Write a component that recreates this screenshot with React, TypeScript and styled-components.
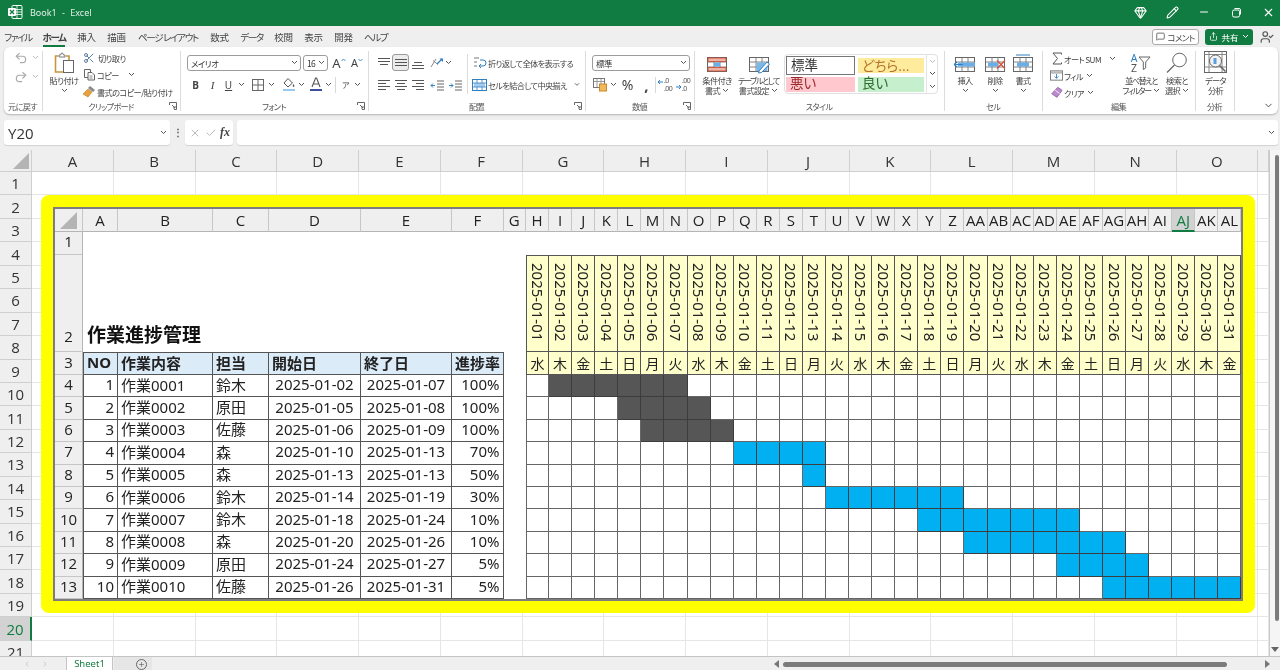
import React from "react";
import styled, { createGlobalStyle } from "styled-components";
import { Undo2, Redo2, Scissors, Gem, Pencil, Minus, X, Check, Plus, MessageSquare, Share, UserCheck, ChevronDown, ChevronLeft, ChevronRight } from "lucide-react";

const UI = `"Noto Sans", "Noto Sans CJK JP", sans-serif`;
const JP = `"Noto Sans CJK JP", sans-serif`;
const GREEN = "#107c41";

const Global = createGlobalStyle`
  html, body { margin: 0; padding: 0; height: 100%; background: #f0f0f0; overflow: hidden; }
  * { box-sizing: border-box; }
`;

const Page = styled.div`
  width: 1280px; height: 670px; display: flex; flex-direction: column; overflow: hidden;
  background: #efefef; font-family: ${JP}; font-feature-settings: "palt"; color: #444; filter: blur(0.3px);
`;
const TitleBar = styled.div`
  height: 26px; flex: none; background: ${GREEN}; display: flex; align-items: center; padding: 0 0 2px 7px; color: #e4efe8;
`;
const TitleText = styled.div`
  font: 9px "Noto Sans", sans-serif; margin-left: 7px; word-spacing: 3px; flex: 1;
`;
const WinBtn = styled.div<{ $w: number }>`
  width: ${(p) => p.$w}px; display: flex; justify-content: center; align-items: center;
`;
const MenuRow = styled.div`
  height: 21px; flex: none; display: flex; align-items: center; padding: 2px 0 0 6px; gap: 13px; font-size: 9.5px;
`;
const MenuItem = styled.div<{ $active?: boolean; $w: number; $kana?: boolean }>`
  width: ${(p) => p.$w}px; height: 18px; line-height: 16px; white-space: nowrap; display: flex; justify-content: center; color: #444;
  letter-spacing: ${(p) => (p.$kana ? "-1.3px" : "-.3px")};
  font-weight: ${(p) => (p.$active ? 700 : 400)};
  border-bottom: 2px solid ${(p) => (p.$active ? GREEN : "transparent")};
`;
const MenuRight = styled.div`
  margin-left: auto; display: flex; align-items: center; padding: 0 6px 2px 0;
`;
const CommentBtn = styled.div`
  width: 47px; height: 16px; background: #fff; border: 1px solid #aaa; border-radius: 3px; font-size: 8.5px; letter-spacing: -.6px;
  display: flex; align-items: center; justify-content: center; gap: 2px; margin-right: 6px;
`;
const ShareBtn = styled.div`
  width: 48px; height: 16px; background: ${GREEN}; border-radius: 3px; color: #fff; font-size: 8.5px;
  display: flex; align-items: center; justify-content: center; gap: 3px; margin-right: 7px;
`;
const Ribbon = styled.div`
  height: 67px; flex: none; margin: 0 2px 0 4px; background: #fff; border-radius: 6px; display: flex;
  box-shadow: 0 1px 2px rgba(0,0,0,.25);
`;
const Group = styled.div<{ $w: number }>`
  width: ${(p) => p.$w}px; display: flex; flex-direction: column; position: relative;
  &::after { content: ""; position: absolute; right: 0; top: 4px; bottom: 3px; width: 1px; background: #dcdcdc; }
`;
const GroupBody = styled.div<{ $pl?: number; $pt?: number; $col?: boolean }>`
  flex: 1; display: flex; flex-direction: ${(p) => (p.$col ? "column" : "row")};
  padding: ${(p) => p.$pt ?? 7}px 0 0 ${(p) => p.$pl ?? 6}px; min-height: 0;
`;
const GroupFoot = styled.div`
  height: 14px; display: grid; grid-template-columns: 1fr auto 1fr; align-items: center; font-size: 8.2px; letter-spacing: -.7px; color: #555;
  padding: 0 2px 2px 0; line-height: 12px;
`;
const FootLabel = styled.span`grid-column: 2; white-space: nowrap;`;
const Launcher = styled.span`grid-column: 3; justify-self: end; display: flex; margin-right: 2px;`;
const SmallRow = styled.div<{ $mt?: number }>`
  display: flex; align-items: center; height: 17px; font-size: 8.2px; letter-spacing: -.6px; white-space: nowrap;
  margin-top: ${(p) => p.$mt ?? 0}px;
`;
const IconCell = styled.div<{ $w: number; $sel?: boolean }>`
  width: ${(p) => p.$w}px; height: 17px; flex: none; display: flex; align-items: center; justify-content: center;
  ${(p) => p.$sel && "border: 1px solid #9a9a9a; border-radius: 3px; background: #ececec;"}
`;
const Gap = styled.div<{ $w: number }>`width: ${(p) => p.$w}px; flex: none;`;
const VLine = styled.div`width: 1px; height: 16px; background: #d8d8d8; flex: none;`;
const Stack = styled.div<{ $w: number; $pt?: number; $pl?: number }>`
  width: ${(p) => p.$w}px; flex: none; display: flex; flex-direction: column;
  padding: ${(p) => p.$pt ?? 0}px 0 0 ${(p) => p.$pl ?? 0}px;
`;
const ColBar = styled.div`width: 1px; height: 40px; background: #dcdcdc; flex: none;`;
const Big = styled.div<{ $w: number; $pt?: number }>`
  width: ${(p) => p.$w}px; flex: none; display: flex; flex-direction: column; align-items: center;
  padding-top: ${(p) => p.$pt ?? 0}px;
  font-size: 8.2px; letter-spacing: -.6px; line-height: 10.5px; text-align: center; white-space: nowrap;
`;
const BigIcon = styled.div`height: 22px; display: flex; align-items: flex-end; justify-content: center; margin-bottom: 1px;`;
const BigLine = styled.div<{ $tight?: boolean }>`
  height: 10px; display: flex; align-items: center; gap: 2px; ${(p) => p.$tight && "letter-spacing: -1.5px;"}
`;
const Select = styled.div<{ $w: number }>`
  width: ${(p) => p.$w}px; height: 16px; flex: none; border: 1px solid #9c9c9c; border-radius: 3px; background: #fff;
  display: flex; align-items: center; justify-content: space-between; padding: 0 2px 0 3px; font-size: 8.5px; color: #333;
`;
const Glyph = styled.span<{ $size?: number; $weight?: number; $italic?: boolean; $under?: boolean; $serif?: boolean }>`
  font: ${(p) => (p.$italic ? "italic" : "normal")} ${(p) => p.$weight ?? 400} ${(p) => p.$size ?? 10}px ${(p) => (p.$serif ? `"Liberation Serif", serif` : `"Noto Sans", sans-serif`)};
  text-decoration: ${(p) => (p.$under ? "underline" : "none")}; color: #444; letter-spacing: 0;
`;
const Gallery = styled.div`
  width: 154px; height: 40px; margin: -1px 0 0 5px; flex: none; border: 1px solid #e0e0e0; border-radius: 4px; display: grid;
  grid-template-columns: 72px 69px 11px; grid-template-rows: 20px 18px; align-items: center;
`;
const StyleCell = styled.div<{ $bg: string; $fg: string; $norm?: boolean; $low?: boolean }>`
  height: ${(p) => (p.$norm ? 19 : 15)}px; background: ${(p) => p.$bg}; color: ${(p) => p.$fg};
  font-size: 13.5px; line-height: ${(p) => (p.$norm ? 15 : p.$low ? 11 : 14)}px; padding-left: 4px; margin: 0 2px 0 1px;
  white-space: nowrap; border: ${(p) => (p.$norm ? "1.5px solid #777" : "none")};
`;
const GalleryScroll = styled.div`
  grid-column: 3; grid-row: 1 / span 2; align-self: stretch; border-left: 1px solid #e4e4e4; display: flex; flex-direction: column;
  align-items: center; justify-content: space-around;
`;
const SortIcon = styled.div`height: 22px; display: flex; align-items: center; gap: 1px;`;
const SortLetters = styled.div`
  display: flex; flex-direction: column; font: 10.5px/10.5px "Noto Sans", sans-serif; color: #555; letter-spacing: 0;
`;
const SortA = styled.span`color: #2f7fc1;`;
const Collapse = styled.div`
  flex: 1; display: flex; justify-content: flex-end; align-items: flex-end; padding: 0 4px 3px 0;
`;
const FormulaBar = styled.div`
  height: 25px; margin: 6px 2px 5px 4px; display: flex; align-items: stretch; flex: none;
`;
const FBox = styled.div<{ $w?: number }>`
  ${(p) => (p.$w ? `width: ${p.$w}px; flex: none;` : "flex: 1;")} background: #fff; border-radius: 3px; display: flex;
  align-items: center; justify-content: space-between; padding: 0 3px 0 4px; box-shadow: 0 1px 1px rgba(0,0,0,.12);
`;
const NameText = styled.span`font: 15px "Open Sans", sans-serif; color: #333;`;
const Dots = styled.div`
  width: 15px; flex: none; text-align: center; font: 700 10px/24px "Noto Sans", sans-serif; color: #555;
`;
const SheetRow = styled.div`height: 506px; display: flex; flex: none; background: #fff;`;
const SheetArea = styled.div`
  width: 1270px; position: relative; overflow: hidden; border-right: 1px solid #c9c9c9;
`;
const OuterGrid = styled.div`
  display: grid; grid-template-columns: 32px repeat(15, 81.75px) 1fr; grid-template-rows: 22px repeat(21, 23.45px);
`;
const OuterHead = styled.div<{ $sel?: boolean }>`
  background: ${(p) => (p.$sel ? "#d2d2d2" : "#efefef")}; color: ${(p) => (p.$sel ? GREEN : "#333")};
  font: 15px "Open Sans", sans-serif; display: flex; align-items: center; justify-content: center;
  border-right: ${(p) => (p.$sel ? `2px solid ${GREEN}` : "1px solid #cfcfcf")}; border-bottom: 1px solid #cfcfcf;
`;
const Corner = styled.div<{ $pad: number }>`
  background: #efefef; display: flex; align-items: flex-end; justify-content: flex-end; padding: 0 ${(p) => p.$pad}px ${(p) => p.$pad}px 0;
  border-right: 1px solid #cfcfcf; border-bottom: 1px solid #cfcfcf;
`;
const OuterCell = styled.div`
  border-right: 1px solid #e6e6e6; border-bottom: 1px solid #e6e6e6; background: #fff;
`;
const Frame = styled.div`
  position: absolute; left: 41px; top: 45px; width: 1214px; height: 418px; background: #ffff00; border-radius: 8px; padding: 12px;
`;
const Inner = styled.div`
  width: 100%; height: 100%; border: 2px solid #7d7d7d; background: #fff; overflow: hidden; display: grid;
  grid-template-columns: 28px 35px 95px 56px 92px 91px 51.5px 22.5px repeat(31, 23.08px);
  grid-template-rows: 23px 22.5px 97.5px 23px repeat(10, 22.4px);
  font-family: "Noto Sans", "Noto Sans CJK JP", sans-serif; font-size: 15px; color: #222;
`;
const InnerHead = styled.div<{ $sel?: boolean }>`
  background: ${(p) => (p.$sel ? "#d2d2d2" : "#efefef")}; color: ${(p) => (p.$sel ? GREEN : "#222")};
  font: 15px "Open Sans", sans-serif; display: flex; align-items: center; justify-content: center; white-space: nowrap; overflow: hidden;
  border-right: 1px solid #c6c6c6; border-bottom: ${(p) => (p.$sel ? `2px solid ${GREEN}` : "1px solid #b5b5b5")};
`;
const InnerRowHead = styled.div<{ $end?: boolean }>`
  background: #efefef; color: #222; font: 15px "Open Sans", sans-serif; display: flex; justify-content: center;
  align-items: ${(p) => (p.$end ? "flex-end" : "center")}; padding-bottom: ${(p) => (p.$end ? 5 : 3)}px;
  border-right: 1px solid #b5b5b5; border-bottom: 1px solid #c6c6c6;
`;
const Blank = styled.div<{ $span?: number }>`
  grid-column: span ${(p) => p.$span ?? 1}; background: #fff;
`;
const Title = styled.div`
  grid-column: span 6; font: 700 19px ${UI}; display: flex; align-items: flex-end; padding: 0 0 4px 4px; background: #fff; color: #111;
`;
const Cell = styled.div<{ $bg?: string; $align?: string; $bold?: boolean; $top?: boolean; $left?: boolean; $line?: string }>`
  background: ${(p) => p.$bg ?? "#fff"}; display: flex; align-items: center; white-space: nowrap; overflow: hidden;
  justify-content: ${(p) => p.$align ?? "flex-start"}; font-weight: ${(p) => (p.$bold ? 700 : 400)};
  padding: 0 3px 3px 3px; color: #222;
  border-right: 1px solid ${(p) => p.$line ?? "#555"}; border-bottom: 1px solid ${(p) => p.$line ?? "#555"};
  ${(p) => p.$top && `border-top: 1px solid ${p.$line ?? "#555"};`}
  ${(p) => p.$left && `border-left: 1px solid ${p.$line ?? "#555"};`}
`;
const DateCell = styled(Cell)`
  writing-mode: vertical-rl; align-items: center; justify-content: flex-start; padding: 7px 0 0 0; font-size: 15px; line-height: 1;
`;
const DayCell = styled(Cell)`padding: 0 0 1px 0; font-size: 14px;`;
const GanttCell = styled(Cell)`padding: 0;`;
const VScroll = styled.div`
  flex: 1; background: #f5f5f5; display: flex; flex-direction: column; align-items: flex-end; padding: 5px 1px 0 0;
`;
const VThumb = styled.div`width: 4px; height: 466px; background: #7b7b7b; border-radius: 3px;`;
const VArrow = styled.div`
  margin: 26px 0 0 0; width: 8px; height: 0; border: 4px solid transparent; border-top: 5px solid #666; border-bottom: 0;
`;
const TabBar = styled.div`
  flex: 1; display: flex; align-items: stretch; background: #efefef; border-top: 1px solid #c4c4c4; font-size: 9.5px;
`;
const TabNav = styled.div`
  width: 66px; flex: none; display: flex; align-items: center; justify-content: center; gap: 10px; padding-left: 6px; color: #b5b5b5;
`;
const Tab = styled.div`
  width: 47px; flex: none; background: #fff; color: ${GREEN}; font: 9.5px "Noto Sans", sans-serif; text-align: center; line-height: 14px;
  border-left: 1px solid #c4c4c4; border-right: 1px solid #c4c4c4;
`;
const TabAdd = styled.div`
  width: 38px; flex: none; margin-left: 1px; padding-left: 16px; background: #e6e6e6; display: flex; align-items: center; justify-content: center;
`;
const AddRing = styled.div`
  width: 11px; height: 11px; border: 1px solid #666; border-radius: 50%; display: flex; align-items: center; justify-content: center;
`;
const HTrack = styled.div`
  flex: 1; display: flex; align-items: center; padding: 0 0 0 622px; gap: 4px;
`;
const HThumb = styled.div`width: 444px; height: 5px; background: #7b7b7b; border-radius: 3px; margin-right: 34px; flex: none;`;
const HArrow = styled.div<{ $left?: boolean }>`
  width: 0; height: 0; flex: none; border-top: 4px solid transparent; border-bottom: 4px solid transparent;
  ${(p) => (p.$left ? "border-right: 5px solid #777;" : "border-left: 5px solid #777;")}
`;

const Chev = ({ c = "#555" }: { c?: string }) => (
  <svg width="7" height="5" viewBox="0 0 7 5"><path d="M1 1l2.5 2.5L6 1" fill="none" stroke={c} strokeWidth="1" /></svg>
);
const Caret = ({ down }: { down?: boolean }) => (
  <svg width="5" height="10" viewBox="0 0 5 10"><path d={down ? "M.5 1L2.5 3 4.5 1" : "M.5 3L2.5 1 4.5 3"} fill="none" stroke="#4a90c8" strokeWidth="1" /></svg>
);
const Launch = () => (
  <svg width="8" height="8" viewBox="0 0 8 8" fill="none" stroke="#666"><path d="M.5 3V.5H7.5V7.5H5M3 3l3 3M6 4v2H4" /></svg>
);
const Lines = ({ l, c = "#555" }: { l: number[][]; c?: string }) => (
  <svg width="14" height="14" viewBox="0 0 14 14" stroke={c} strokeWidth="1">
    {l.map((a, i) => <line key={i} x1={a[0]} x2={a[1]} y1={a[2] + 0.5} y2={a[2] + 0.5} />)}
  </svg>
);
const Excel = () => (
  <svg width="16" height="16" viewBox="0 0 16 16">
    <rect x="5" y="1.5" width="10" height="13" rx="1" fill="none" stroke="#fff" />
    <path d="M10 2v12M5 5.5h10M5 8h10M5 10.5h10" stroke="#fff" strokeWidth=".8" />
    <rect x="1" y="4" width="8" height="8" rx="1" fill="#fff" />
    <path d="M3 6l4 4M7 6l-4 4" stroke={GREEN} strokeWidth="1.3" />
  </svg>
);
const Paste = () => (
  <svg width="21" height="22" viewBox="0 0 21 22">
    <path d="M4 4H1.5v16h8" fill="#fff" stroke="#c8963e" strokeWidth="1.6" />
    <path d="M12 4h3v4" fill="none" stroke="#c8963e" strokeWidth="1.6" />
    <path d="M5 5V3h1.5l1-2h1l1 2H11v2z" fill="#fff" stroke="#777" />
    <rect x="9.5" y="8.5" width="10" height="12" fill="#fff" stroke="#666" />
  </svg>
);
const CopyI = () => (
  <svg width="13" height="13" viewBox="0 0 13 13" fill="#fff" stroke="#666">
    <path d="M1.5 1.5h6v8h-6z" /><path d="M5 4.5h4l2.5 2.5v5H5z" /><path d="M6.5 8h3M6.5 10h3" stroke="#888" />
  </svg>
);
const Painter = () => (
  <svg width="14" height="14" viewBox="0 0 14 14">
    <path d="M8 1l5 4-2 2-5-4z" fill="#888" /><path d="M6 4l4 3-4 5-5-3z" fill="#e6a23c" stroke="#b9772a" strokeWidth=".6" />
  </svg>
);
const Borders = () => (
  <svg width="14" height="14" viewBox="0 0 14 14" fill="none" stroke="#666"><rect x="1.5" y="1.5" width="11" height="11" /><path d="M7 2v10M2 7h10" /></svg>
);
const Fill = () => (
  <svg width="14" height="15" viewBox="0 0 14 15"><path d="M6 1.5l4.5 4.5L6 10 2 6z" fill="#fff" stroke="#555" /><path d="M11.5 7c1 1.6 1.4 2.3 0 3-1.2-.7-1-1.4 0-3z" fill="#555" /><rect x="1" y="12" width="12" height="2" fill="#9dc8ee" /></svg>
);
const FontColor = () => (
  <svg width="14" height="15" viewBox="0 0 14 15"><path d="M3 10l3.6-9h1L11 10M4.5 7h5" fill="none" stroke="#555" strokeWidth="1.1" /><rect x="1" y="12" width="12" height="2" fill="#3c4e99" /></svg>
);
const Orient = () => (
  <svg width="15" height="14" viewBox="0 0 15 14"><path d="M2 11L7 3M4 4.5l5 4" stroke="#888" fill="none" /><path d="M8 8l5-5" stroke="#2f7fc1" strokeWidth="1.2" /><path d="M10.5 2.5H14V6z" fill="#2f7fc1" /></svg>
);
const Indent = ({ flip }: { flip?: boolean }) => (
  <svg width="14" height="14" viewBox="0 0 14 14"><path d="M7 3h7M7 6h7M7 9h7M7 12h7" stroke="#666" /><path d={flip ? "M1 7.5h4M3 5.5l2 2-2 2" : "M5 7.5H1M3 5.5l-2 2 2 2"} stroke="#2f7fc1" fill="none" /></svg>
);
const Wrap = () => (
  <svg width="15" height="15" viewBox="0 0 15 15" fill="none"><path d="M2 3h5M2 7h3M2 11h3" stroke="#777" /><path d="M8 5h3a2.5 2.5 0 0 1 0 6H7M9 9l-2 2 2 2" stroke="#2f7fc1" /></svg>
);
const Merge = () => (
  <svg width="15" height="14" viewBox="0 0 15 14"><rect x=".5" y="1.5" width="14" height="11" fill="#fff" stroke="#2f7fc1" /><rect x="2" y="5" width="11" height="4" fill="#a8cdee" /><path d="M.5 5h14M.5 9h14M5 2v3M10 2v3M5 9v3M10 9v3" stroke="#2f7fc1" strokeWidth=".8" /></svg>
);
const Account = () => (
  <svg width="15" height="15" viewBox="0 0 15 15"><rect x=".5" y="1.5" width="11" height="9" fill="#fff" stroke="#777" /><path d="M1 4.5h10M4 2v8M8 2v8" stroke="#999" /><rect x="6.5" y="7" width="7" height="7" fill="#f2b95c" stroke="#c88a2a" /></svg>
);
const Decimal = ({ dec }: { dec?: boolean }) => (
  <svg width="16" height="15" viewBox="0 0 16 15" fontFamily="Noto Sans, sans-serif" fontSize="7" fill="#555">
    <text x="7" y="6">{dec ? ".00" : ".0"}</text><text x="7" y="14">{dec ? ".0" : ".00"}</text>
    <path d={dec ? "M1 10h5M4 8l2 2-2 2" : "M6 5H1M3 3L1 5l2 2"} stroke="#2f7fc1" fill="none" />
  </svg>
);
const Table = ({ children }: { children?: React.ReactNode }) => (
  <svg width="22" height="20" viewBox="0 0 22 20" fill="none">
    <rect x="1.5" y="3.5" width="19" height="14" fill="#fff" stroke="#666" />
    <path d="M1.5 8h19M1.5 13h19M8 3.5v14M14 3.5v14" stroke="#777" strokeWidth=".9" />
    {children}
  </svg>
);
const Cond = () => (
  <Table>
    <rect x="2" y="4" width="18" height="3.5" fill="#f0b2a5" stroke="#c4492f" strokeWidth=".8" />
    <rect x="2" y="13.5" width="18" height="3.5" fill="#f0b2a5" stroke="#c4492f" strokeWidth=".8" />
    <rect x="8" y="8.5" width="6" height="4" fill="#6aaee6" />
  </Table>
);
const TableFmt = () => (
  <Table>
    <rect x="8.5" y="8.5" width="11" height="8.5" fill="#7bb8ea" />
    <path d="M11 17L19 8l2.5 2-8 8.5-3 .5z" fill="#fff" stroke="#2f7fc1" />
  </Table>
);
const Insert = () => (
  <Table>
    <rect x="4" y="8.5" width="17" height="4" fill="#69aee6" />
    <path d="M9 10.5H0M3 8l-3 2.5L3 13" stroke="#2f7fc1" strokeWidth="1.2" />
  </Table>
);
const Remove = () => (
  <Table>
    <rect x="4" y="8.5" width="10" height="4" fill="#69aee6" />
    <path d="M13 6.5l8 8M21 6.5l-8 8" stroke="#d9503c" strokeWidth="1.3" />
  </Table>
);
const Format = () => (
  <Table>
    <rect x="5" y="8.5" width="12" height="4" fill="#69aee6" />
    <path d="M4 1h14" stroke="#2f7fc1" />
  </Table>
);
const Sum = () => (
  <svg width="12" height="13" viewBox="0 0 12 13"><path d="M10.5 2.5V1H2l4.5 5.5L2 12h8.5v-1.5" fill="none" stroke="#555" /></svg>
);
const FillDown = () => (
  <svg width="14" height="13" viewBox="0 0 14 13"><rect x=".5" y="1.5" width="13" height="10" fill="#fff" stroke="#777" /><rect x="1" y="2" width="12" height="2.5" fill="#b9b9b9" /><path d="M7 5v4.5M5 7.5l2 2 2-2" stroke="#2f7fc1" fill="none" /></svg>
);
const Eraser = () => (
  <svg width="15" height="15" viewBox="0 0 15 15"><path d="M9 1.5l5 3.5-6 8-6-4z" fill="#b98ad0" stroke="#96609f" /><path d="M6 5l5 3.5" stroke="#fff" /></svg>
);
const Funnel = () => (
  <svg width="13" height="14" viewBox="0 0 13 14"><path d="M1 1h11L7.7 6v6l-2.4 1.5V6z" fill="#fff" stroke="#666" /></svg>
);
const Find = () => (
  <svg width="22" height="22" viewBox="0 0 22 22" fill="none" stroke="#666"><circle cx="13.5" cy="8" r="6.8" /><path d="M8.5 13L1 20.5" strokeWidth="1.2" /></svg>
);
const Analyze = () => (
  <svg width="23" height="23" viewBox="0 0 23 23" fill="none" stroke="#666">
    <rect x=".5" y=".5" width="22" height="21" fill="#fff" />
    <path d="M.5 3.5h22M.5 16h22M5 1v20M18 1v20" stroke="#888" />
    <circle cx="11.5" cy="10" r="6" fill="#f3f3f3" />
    <rect x="9.5" y="7" width="3" height="6" fill="#5a9fdc" stroke="none" />
    <path d="M15.5 14.5l6 6" strokeWidth="1.6" />
  </svg>
);
const Triangle = ({ size }: { size: number }) => (
  <svg width={size} height={size} viewBox="0 0 10 10"><path d="M10 0v10H0z" fill="#b4b4b4" /></svg>
);
const Restore = () => (
  <svg width="11" height="11" viewBox="0 0 11 11" fill="none" stroke="#fff"><rect x="1.5" y="3" width="7" height="7" rx="1.5" /><path d="M3.5 1.5h4.5a1.5 1.5 0 0 1 1.5 1.5v4.5" /></svg>
);

const letters = (i: number) => (i < 26 ? String.fromCharCode(65 + i) : "A" + String.fromCharCode(39 + i));
const days = ["水", "木", "金", "土", "日", "月", "火"];
type Task = { no: number; name: string; who: string; s: number; e: number; pct: number };
const tasks: Task[] = [
  { no: 1, name: "作業0001", who: "鈴木", s: 2, e: 7, pct: 100 },
  { no: 2, name: "作業0002", who: "原田", s: 5, e: 8, pct: 100 },
  { no: 3, name: "作業0003", who: "佐藤", s: 6, e: 9, pct: 100 },
  { no: 4, name: "作業0004", who: "森", s: 10, e: 13, pct: 70 },
  { no: 5, name: "作業0005", who: "森", s: 13, e: 13, pct: 50 },
  { no: 6, name: "作業0006", who: "鈴木", s: 14, e: 19, pct: 30 },
  { no: 7, name: "作業0007", who: "鈴木", s: 18, e: 24, pct: 10 },
  { no: 8, name: "作業0008", who: "森", s: 20, e: 26, pct: 10 },
  { no: 9, name: "作業0009", who: "原田", s: 24, e: 27, pct: 5 },
  { no: 10, name: "作業0010", who: "佐藤", s: 26, e: 31, pct: 5 },
];
const d2 = (n: number) => String(n).padStart(2, "0");
const dt = (n: number) => `2025-01-${d2(n)}`;
const menu: [string, number, boolean?][] = [
  ["ファイル", 24], ["ホーム", 22, true], ["挿入", 17], ["描画", 17], ["ページ レイアウト", 60], ["数式", 17],
  ["データ", 21], ["校閲", 17], ["表示", 17], ["開発", 17], ["ヘルプ", 21],
];
const range = (n: number) => Array.from({ length: n }, (_, i) => i);
const colNames = ["A", "B", "C", "D", "E", "F", "G", "H", "I", "J", "K", "L", "M", "N", "O"];
const HEADS = ["NO", "作業内容", "担当", "開始日", "終了日", "進捗率"];

const Foot = ({ label, launch }: { label: string; launch?: boolean }) => (
  <GroupFoot>
    <FootLabel>{label}</FootLabel>
    {launch && <Launcher><Launch /></Launcher>}
  </GroupFoot>
);

const InnerSheet = () => (
  <Inner>
    <InnerHead><Triangle size={17} /></InnerHead>
    {range(38).map((i) => <InnerHead key={i} $sel={letters(i) === "AJ"}>{letters(i)}</InnerHead>)}

    <InnerRowHead>1</InnerRowHead>
    <Blank $span={38} />

    <InnerRowHead $end>2</InnerRowHead>
    <Title>作業進捗管理</Title>
    <Blank />
    {range(31).map((i) => <DateCell key={i} $bg="#ffffcc" $top $left={i === 0}>{dt(i + 1)}</DateCell>)}

    <InnerRowHead>3</InnerRowHead>
    {HEADS.map((h, i) => <Cell key={h} $bg="#dcebf8" $bold $top $left={i === 0}>{h}</Cell>)}
    <Blank />
    {range(31).map((i) => <DayCell key={i} $bg="#ffffcc" $align="center" $left={i === 0}>{days[i % 7]}</DayCell>)}

    {tasks.map((t, r) => (
      <React.Fragment key={t.no}>
        <InnerRowHead>{r + 4}</InnerRowHead>
        <Cell $align="flex-end" $left>{t.no}</Cell>
        <Cell>{t.name}</Cell>
        <Cell>{t.who}</Cell>
        <Cell $align="center">{dt(t.s)}</Cell>
        <Cell $align="center">{dt(t.e)}</Cell>
        <Cell $align="flex-end">{t.pct}%</Cell>
        <Blank />
        {range(31).map((i) => {
          const on = i + 1 >= t.s && i + 1 <= t.e;
          return <GanttCell key={i} $left={i === 0} $bg={on ? (t.pct === 100 ? "#565656" : "#00b0f0") : "#fff"} $line={on ? "#3d3d3d" : "#666"} />;
        })}
      </React.Fragment>
    ))}
  </Inner>
);

export default function App() {
  return (
    <Page>
      <Global />
      <TitleBar>
        <Excel />
        <TitleText>Book1  -  Excel</TitleText>
        <WinBtn $w={32}><Gem size={13} color="#fff" /></WinBtn>
        <WinBtn $w={32}><Pencil size={13} color="#fff" /></WinBtn>
        <WinBtn $w={32}><Minus size={12} color="#fff" /></WinBtn>
        <WinBtn $w={32}><Restore /></WinBtn>
        <Gap $w={4} />
        <WinBtn $w={24}><X size={13} color="#fff" /></WinBtn>
      </TitleBar>

      <MenuRow>
        {menu.map(([t, w, a]) => <MenuItem key={t} $w={w} $active={a} $kana={/[ァ-ヶ]/.test(t)}>{t}</MenuItem>)}
        <MenuRight>
          <CommentBtn><MessageSquare size={9} color="#444" />コメント</CommentBtn>
          <ShareBtn><Share size={9} color="#fff" />共有<Chev c="#fff" /></ShareBtn>
          <UserCheck size={14} color="#555" />
        </MenuRight>
      </MenuRow>

      <Ribbon>
        <Group $w={39}>
          <GroupBody $pl={8} $pt={1} $col>
            <SmallRow $mt={1}><IconCell $w={17}><Undo2 size={14} color="#aaa" /></IconCell><IconCell $w={12}><Chev c="#bbb" /></IconCell></SmallRow>
            <SmallRow $mt={2}><IconCell $w={17}><Redo2 size={14} color="#aaa" /></IconCell><IconCell $w={12}><Chev c="#bbb" /></IconCell></SmallRow>
          </GroupBody>
          <Foot label="元に戻す" />
        </Group>

        <Group $w={138}>
          <GroupBody $pl={3} $pt={2}>
            <Big $w={36} $pt={3}>
              <BigIcon><Paste /></BigIcon>
              <BigLine>貼り付け</BigLine>
              <BigLine><Chev /></BigLine>
            </Big>
            <Stack $w={95}>
              <SmallRow><IconCell $w={14}><Scissors size={12} color="#5f7fa3" /></IconCell><Gap $w={2} />切り取り</SmallRow>
              <SmallRow><IconCell $w={14}><CopyI /></IconCell><Gap $w={1} />コピー<Gap $w={9} /><Chev /></SmallRow>
              <SmallRow><IconCell $w={14}><Painter /></IconCell><Gap $w={1} />書式のコピー/貼り付け</SmallRow>
            </Stack>
          </GroupBody>
          <Foot label="クリップボード" launch />
        </Group>

        <Group $w={188}>
          <GroupBody $col>
            <SmallRow>
              <Select $w={114}>メイリオ<Chev /></Select><Gap $w={2} />
              <Select $w={25}>16<Chev /></Select><Gap $w={2} />
              <IconCell $w={18}><Glyph $size={13}>A</Glyph><Caret /></IconCell>
              <IconCell $w={18}><Glyph $size={11}>A</Glyph><Caret down /></IconCell>
            </SmallRow>
            <SmallRow $mt={5}>
              <IconCell $w={17}><Glyph $weight={700}>B</Glyph></IconCell>
              <IconCell $w={17}><Glyph $italic $serif $size={11}>I</Glyph></IconCell>
              <IconCell $w={15}><Glyph $under>U</Glyph></IconCell>
              <IconCell $w={11}><Chev /></IconCell><Gap $w={3} />
              <IconCell $w={16}><Borders /></IconCell>
              <IconCell $w={11}><Chev /></IconCell><Gap $w={4} />
              <IconCell $w={16}><Fill /></IconCell>
              <IconCell $w={9}><Chev /></IconCell><Gap $w={2} />
              <IconCell $w={16}><FontColor /></IconCell>
              <IconCell $w={9}><Chev /></IconCell><Gap $w={2} /><VLine /><Gap $w={3} />
              <IconCell $w={14}><Glyph $size={8}>ア</Glyph></IconCell>
              <IconCell $w={9}><Chev /></IconCell>
            </SmallRow>
          </GroupBody>
          <Foot label="フォント" launch />
        </Group>

        <Group $w={217}>
          <GroupBody>
            <Stack $w={92}>
              <SmallRow>
                <IconCell $w={17}><Lines l={[[1, 13, 2], [1, 13, 5], [3, 11, 8]]} /></IconCell>
                <IconCell $w={17} $sel><Lines l={[[1, 13, 3], [1, 13, 6], [1, 13, 9]]} /></IconCell>
                <IconCell $w={17}><Lines l={[[3, 11, 6], [1, 13, 9], [1, 13, 12]]} /></IconCell>
                <Gap $w={2} /><IconCell $w={16}><Orient /></IconCell><IconCell $w={8}><Chev /></IconCell>
              </SmallRow>
              <SmallRow $mt={5}>
                <IconCell $w={17}><Lines l={[[1, 13, 2], [1, 9, 5], [1, 13, 8], [1, 9, 11]]} /></IconCell>
                <IconCell $w={17}><Lines l={[[1, 13, 2], [3, 11, 5], [1, 13, 8], [3, 11, 11]]} /></IconCell>
                <IconCell $w={17}><Lines l={[[1, 13, 2], [5, 13, 5], [1, 13, 8], [5, 13, 11]]} /></IconCell>
                <Gap $w={2} /><IconCell $w={18}><Indent /></IconCell><IconCell $w={18}><Indent flip /></IconCell>
              </SmallRow>
            </Stack>
            <ColBar />
            <Stack $w={112} $pl={4}>
              <SmallRow><IconCell $w={15}><Wrap /></IconCell><Gap $w={1} />折り返して全体を表示する</SmallRow>
              <SmallRow $mt={5}><IconCell $w={15}><Merge /></IconCell><Gap $w={1} />セルを結合して中央揃え<Gap $w={7} /><Chev /></SmallRow>
            </Stack>
          </GroupBody>
          <Foot label="配置" launch />
        </Group>

        <Group $w={109}>
          <GroupBody $col>
            <SmallRow><Select $w={98}>標準<Chev /></Select></SmallRow>
            <SmallRow $mt={5}>
              <Gap $w={1} /><IconCell $w={15}><Account /></IconCell><IconCell $w={10}><Chev /></IconCell><Gap $w={1} />
              <IconCell $w={17}><Glyph $size={14}>%</Glyph></IconCell><Gap $w={2} />
              <IconCell $w={17}><Glyph $size={15} $weight={700}>,</Glyph></IconCell>
              <VLine /><Gap $w={1} />
              <IconCell $w={16}><Decimal /></IconCell><Gap $w={2} />
              <IconCell $w={16}><Decimal dec /></IconCell>
            </SmallRow>
          </GroupBody>
          <Foot label="数値" launch />
        </Group>

        <Group $w={250}>
          <GroupBody $pl={1} $pt={5}>
            <Big $w={42}>
              <BigIcon><Cond /></BigIcon>
              <BigLine>条件付き</BigLine>
              <BigLine>書式<Chev /></BigLine>
            </Big>
            <Big $w={41}>
              <BigIcon><TableFmt /></BigIcon>
              <BigLine $tight>テーブルとして</BigLine>
              <BigLine>書式設定<Chev /></BigLine>
            </Big>
            <Stack $w={160} $pt={3}>
              <Gallery>
                <StyleCell $norm $bg="#fff" $fg="#333">標準</StyleCell>
                <StyleCell $bg="#ffeb9c" $fg="#b5752a">どちら...</StyleCell>
                <GalleryScroll><Chev c="#bbb" /><Chev /><Chev /></GalleryScroll>
                <StyleCell $low $bg="#ffc7ce" $fg="#9c2a2a">悪い</StyleCell>
                <StyleCell $low $bg="#c6efce" $fg="#2c6b2c">良い</StyleCell>
              </Gallery>
            </Stack>
          </GroupBody>
          <Foot label="スタイル" />
        </Group>

        <Group $w={98}>
          <GroupBody $pl={5} $pt={5}>
            <Big $w={30}><BigIcon><Insert /></BigIcon><BigLine>挿入</BigLine><BigLine><Chev /></BigLine></Big>
            <Big $w={30}><BigIcon><Remove /></BigIcon><BigLine>削除</BigLine><BigLine><Chev /></BigLine></Big>
            <Big $w={26}><BigIcon><Format /></BigIcon><BigLine>書式</BigLine><BigLine><Chev /></BigLine></Big>
          </GroupBody>
          <Foot label="セル" />
        </Group>

        <Group $w={153}>
          <GroupBody $pl={7} $pt={3}>
            <Stack $w={73}>
              <SmallRow><IconCell $w={13}><Sum /></IconCell><Gap $w={1} />オート SUM<Gap $w={8} /><Chev /></SmallRow>
              <SmallRow><IconCell $w={13}><FillDown /></IconCell><Gap $w={1} />フィル<Gap $w={3} /><Chev /></SmallRow>
              <SmallRow><IconCell $w={13}><Eraser /></IconCell><Gap $w={1} />クリア<Gap $w={3} /><Chev /></SmallRow>
            </Stack>
            <Big $w={36} $pt={2}>
              <BigIcon><SortIcon><SortLetters><SortA>A</SortA><span>Z</span></SortLetters><Funnel /></SortIcon></BigIcon>
              <BigLine $tight>並べ替えと</BigLine><BigLine $tight>フィルター<Chev /></BigLine>
            </Big>
            <Big $w={36} $pt={2}><BigIcon><Find /></BigIcon><BigLine>検索と</BigLine><BigLine>選択<Chev /></BigLine></Big>
          </GroupBody>
          <Foot label="編集" />
        </Group>

        <Group $w={39}>
          <GroupBody $pl={0} $pt={5}>
            <Big $w={39}><BigIcon><Analyze /></BigIcon><BigLine>データ</BigLine><BigLine>分析</BigLine></Big>
          </GroupBody>
          <Foot label="分析" />
        </Group>
        <Collapse><ChevronDown size={11} color="#444" /></Collapse>
      </Ribbon>

      <FormulaBar>
        <FBox $w={166}><NameText>Y20</NameText><Chev /></FBox>
        <Dots>⋮</Dots>
        <FBox $w={48}>
          <X size={12} color="#bbb" /><Check size={12} color="#bbb" />
          <Glyph $italic $serif $weight={700} $size={12}>fx</Glyph>
        </FBox>
        <Gap $w={4} />
        <FBox><span /><Chev /></FBox>
      </FormulaBar>

      <SheetRow>
        <SheetArea>
          <OuterGrid>
            <Corner $pad={2}><Triangle size={16} /></Corner>
            {colNames.map((c) => <OuterHead key={c}>{c}</OuterHead>)}
            <OuterHead />
            {range(21).map((r) => (
              <React.Fragment key={r}>
                <OuterHead $sel={r === 19}>{r + 1}</OuterHead>
                {range(16).map((c) => <OuterCell key={c} />)}
              </React.Fragment>
            ))}
          </OuterGrid>
          <Frame><InnerSheet /></Frame>
        </SheetArea>
        <VScroll><VThumb /><VArrow /></VScroll>
      </SheetRow>

      <TabBar>
        <TabNav><ChevronLeft size={8} /><ChevronRight size={8} /></TabNav>
        <Tab>Sheet1</Tab>
        <TabAdd><AddRing><Plus size={7} color="#555" /></AddRing></TabAdd>
        <HTrack><HArrow $left /><HThumb /><HArrow /></HTrack>
      </TabBar>
    </Page>
  );
}
